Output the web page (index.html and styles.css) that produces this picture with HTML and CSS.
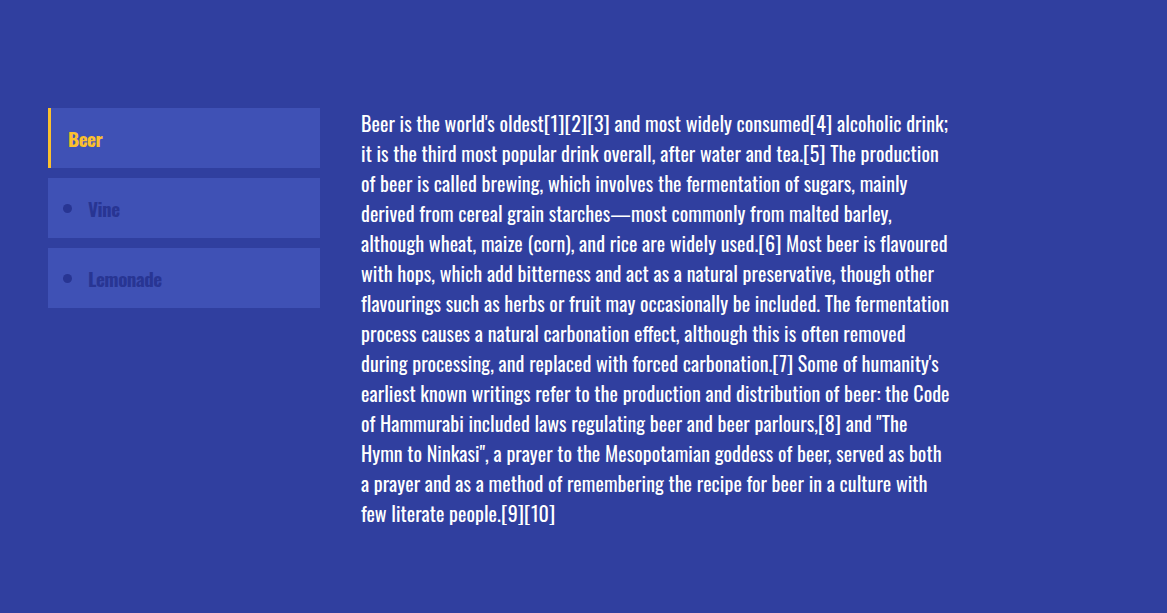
FILE: index.html
```html
<!DOCTYPE html>
<html>
<head>
<meta charset="utf-8">
<link rel="stylesheet" href="styles.css">
</head>
<body>
<div class="page">
  <nav class="tabs">
    <div class="tab active"><span class="label">Beer</span></div>
    <div class="tab"><span class="dot"></span><span class="label">Vine</span></div>
    <div class="tab"><span class="dot"></span><span class="label">Lemonade</span></div>
  </nav>
  <p class="content">Beer is the world's oldest[1][2][3] and most widely consumed[4] alcoholic drink; it is the third most popular drink overall, after water and tea.[5] The production of beer is called brewing, which involves the fermentation of sugars, mainly derived from cereal grain starches—most commonly from malted barley, although wheat, maize (corn), and rice are widely used.[6] Most beer is flavoured with hops, which add bitterness and act as a natural preservative, though other flavourings such as herbs or fruit may occasionally be included. The fermentation process causes a natural carbonation effect, although this is often removed during processing, and replaced with forced carbonation.[7] Some of humanity's earliest known writings refer to the production and distribution of beer: the Code of Hammurabi included laws regulating beer and beer parlours,[8] and "The Hymn to Ninkasi", a prayer to the Mesopotamian goddess of beer, served as both a prayer and as a method of remembering the recipe for beer in a culture with few literate people.[9][10]</p>
</div>
</body>
</html>
```
FILE: styles.css
```css
html, body {
  margin: 0;
  padding: 0;
  background: #303f9f;
  height: 100%;
}
body {
  font-family: "Oswald", "Roboto Condensed", sans-serif;
}
.page {
  display: flex;
  align-items: flex-start;
  padding: 108px 0 0 48px;
  gap: 41px;
}
.tabs {
  display: flex;
  flex-direction: column;
  gap: 10px;
  width: 272px;
  flex: none;
}
.tab {
  height: 60px;
  background: #3f51b5;
  display: flex;
  align-items: center;
  padding-left: 15px;
  box-sizing: border-box;
  font-size: 19px;
  font-weight: 700;
  letter-spacing: -0.5px;
  color: #283593;
}
.tab.active {
  border-left: 3px solid #fbc02d;
  padding-left: 17px;
  color: #fbc02d;
}
.dot {
  width: 9px;
  height: 9px;
  border-radius: 50%;
  background: #283593;
  margin-right: 16px;
}
.content {
  margin: 0;
  width: 590px;
  color: #ffffff;
  font-size: 20px;
  letter-spacing: 0.05px;
  line-height: 30px;
}
```
